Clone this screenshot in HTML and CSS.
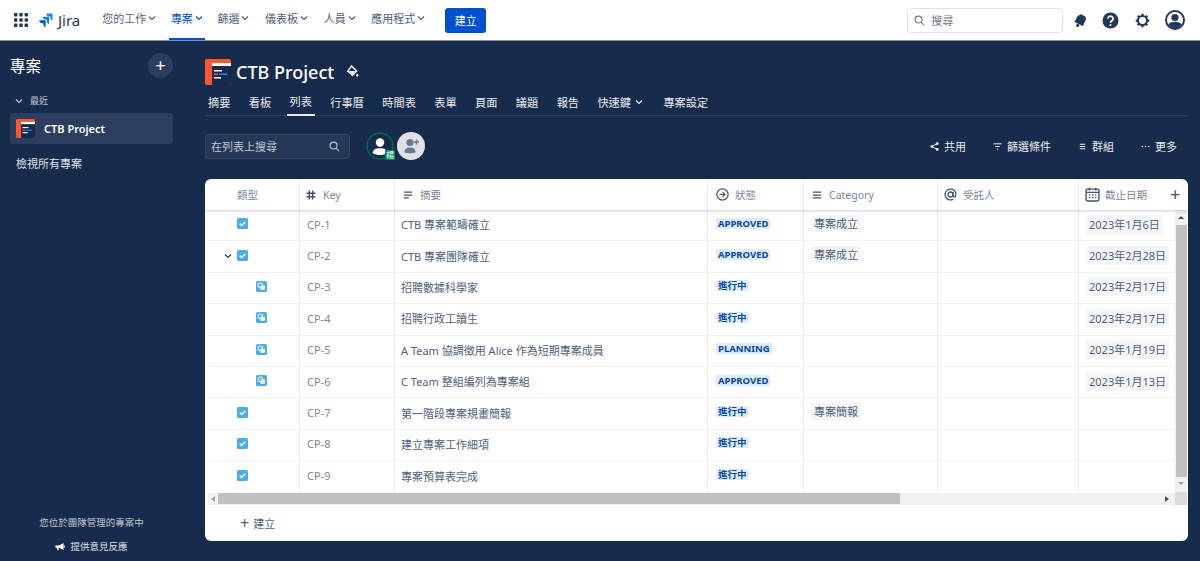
FILE: index.html
```html
<!DOCTYPE html>
<html lang="zh-Hant">
<head>
    <meta charset="UTF-8">
    <title>CTB Project - 列表</title>
    <link rel="stylesheet" href="styles.css">
</head>
<body>

<svg class="defs">
    <defs>
        <symbol id="chev" viewBox="0 0 8 8"><path d="M1 2.500l3 3 3-3" fill="none" stroke="currentColor" stroke-width="1.200"/></symbol>
        <symbol id="logo" viewBox="0 0 26 26">
            <rect width="26" height="26" rx="2" fill="#ff5630"/>
            <path d="M7 7h19v17a2 2 0 0 1-2 2H7z" fill="#172b4d"/>
            <rect x="7" y="4" width="19" height="3" fill="#fff"/>
            <rect x="9" y="11" width="8" height="1.500" fill="#fff"/>
            <rect x="9" y="14.500" width="4" height="1.500" fill="#ff5630"/>
            <rect x="14" y="14.500" width="8" height="1.500" fill="#2684ff"/>
            <rect x="9" y="18" width="7" height="1.500" fill="#fff"/>
        </symbol>
        <symbol id="task" viewBox="0 0 11 11">
            <rect width="11" height="11" rx="1.500" fill="#4bade8"/>
            <path d="M2.800 5.600l1.900 1.900 3.600-3.800" fill="none" stroke="#fff" stroke-width="1.500"/>
        </symbol>
        <symbol id="subtask" viewBox="0 0 11 11">
            <rect width="11" height="11" rx="1.500" fill="#4bade8"/>
            <rect x="2.200" y="2.200" width="4.200" height="4.200" rx=".6" fill="none" stroke="#fff" stroke-width="1"/>
            <rect x="4.400" y="4.400" width="4.400" height="4.400" rx=".6" fill="#fff"/>
        </symbol>
        <symbol id="lines" viewBox="0 0 12 12"><path d="M1 2.500h10M1 6h10M1 9.500h6" fill="none" stroke="currentColor" stroke-width="1.500"/></symbol>
    </defs>
</svg>

<header class="topbar">
    <svg class="apps" viewBox="0 0 14 14" fill="#253858">
        <rect x="0" y="0" width="3.400" height="3.400" rx=".6"/><rect x="5.300" y="0" width="3.400" height="3.400" rx=".6"/><rect x="10.600" y="0" width="3.400" height="3.400" rx=".6"/>
        <rect x="0" y="5.300" width="3.400" height="3.400" rx=".6"/><rect x="5.300" y="5.300" width="3.400" height="3.400" rx=".6"/><rect x="10.600" y="5.300" width="3.400" height="3.400" rx=".6"/>
        <rect x="0" y="10.600" width="3.400" height="3.400" rx=".6"/><rect x="5.300" y="10.600" width="3.400" height="3.400" rx=".6"/><rect x="10.600" y="10.600" width="3.400" height="3.400" rx=".6"/>
    </svg>
    <div class="brand">
        <svg class="brand-mark" viewBox="0 0 15 15">
            <path d="M14.500 0.500H8.200c0 1.700 1.300 3 3 3h1.100v1.100c0 1.600 1 2.800 2.200 3z" fill="#2684ff"/>
            <path d="M11 3.800H4.800c0 1.700 1.300 3 3 3h1.100v1.100c0 1.600 1 2.800 2.100 3z" fill="#1d78f2"/>
            <path d="M7.600 7.200H1.200c0 1.700 1.400 3 3 3h1.200v1.100c0 1.600 1 2.900 2.200 3.200z" fill="#0052cc"/>
        </svg>
        <span>Jira</span>
    </div>
    <nav class="topnav">
        <a class="topnav-item">您的工作<svg class="chev"><use href="#chev"/></svg></a>
        <a class="topnav-item active">專案<svg class="chev"><use href="#chev"/></svg></a>
        <a class="topnav-item">篩選<svg class="chev"><use href="#chev"/></svg></a>
        <a class="topnav-item">儀表板<svg class="chev"><use href="#chev"/></svg></a>
        <a class="topnav-item">人員<svg class="chev"><use href="#chev"/></svg></a>
        <a class="topnav-item">應用程式<svg class="chev"><use href="#chev"/></svg></a>
    </nav>
    <button class="create-btn">建立</button>
    <div class="top-search">
        <svg class="search-icon" viewBox="0 0 12 12"><circle cx="5" cy="5" r="3.800" fill="none" stroke="#6b778c" stroke-width="1.200"/><path d="M8 8l3 3" stroke="#6b778c" stroke-width="1.200"/></svg>
        <span>搜尋</span>
    </div>
    <div class="top-icons">
        <svg class="top-icon bell" viewBox="0 0 16 16"><path d="M9.200 1.500c-.8-.5-1.600-.2-2 .5C4.500 2.700 3.600 4.500 3.300 7L1.200 9.200 10.800 14l.9-3c1.600-1.800 2.300-3.600 1.800-5.400.4-.8.200-1.600-.5-2z" fill="#253858"/><circle cx="5" cy="13.200" r="1.700" fill="#253858"/></svg>
        <svg class="top-icon help" viewBox="0 0 18 18"><circle cx="9" cy="9" r="8.500" fill="#253858"/><path d="M6.300 7a2.700 2.700 0 1 1 4.200 2.300c-.9.600-1.500 1-1.500 2" fill="none" stroke="#fff" stroke-width="1.800"/><circle cx="9" cy="13.700" r="1.100" fill="#fff"/></svg>
        <svg class="top-icon gear" viewBox="0 0 16 16"><circle cx="8" cy="8" r="4.800" fill="none" stroke="#253858" stroke-width="2.200"/><path d="M8 .8v2.400M8 12.800v2.400M.8 8h2.400M12.800 8h2.400M2.900 2.900l1.700 1.700M11.400 11.400l1.700 1.700M13.100 2.900l-1.700 1.700M4.600 11.400l-1.700 1.700" stroke="#253858" stroke-width="2.400"/></svg>
        <svg class="top-icon avatar" viewBox="0 0 20 20"><circle cx="10" cy="10" r="9" fill="#fff" stroke="#253858" stroke-width="2"/><circle cx="10" cy="7.500" r="3.600" fill="#253858"/><path d="M3.500 14.500c1-2 3-2.800 6.500-2.800s5.500.8 6.500 2.800C15 17 12.500 18.500 10 18.500S5 17 3.500 14.500z" fill="#253858"/></svg>
    </div>
</header>

<div class="layout">
    <aside class="sidebar">
        <div class="side-head">
            <h2>專案</h2>
            <span class="side-add">+</span>
        </div>
        <div class="side-group"><svg class="chev"><use href="#chev"/></svg>最近</div>
        <div class="side-project">
            <svg class="side-logo"><use href="#logo"/></svg>
            CTB Project
        </div>
        <div class="side-all">檢視所有專案</div>
        <div class="side-foot">
            <p>您位於團隊管理的專案中</p>
            <p class="feedback">
                <svg class="feedback-icon" viewBox="0 0 10 10"><path d="M.5 3.500h3.500L8.500 1v7L4 5.800H3.300l.7 2.400H2.600L1.800 5.800H.5z" fill="#fff"/><path d="M9.200 3.400v2.400" stroke="#fff"/></svg>
                提供意見反應
            </p>
        </div>
    </aside>

    <main class="main">
        <div class="project-head">
            <svg class="project-logo"><use href="#logo"/></svg>
            <h1>CTB Project</h1>
            <svg class="paint" viewBox="0 0 14 14"><path d="M6 1l5.500 5.500L7 11 2 6.500z" fill="none" stroke="#fff" stroke-width="1.500"/><path d="M3 6.500h7L7 10z" fill="#fff"/><circle cx="12" cy="11" r="1.300" fill="#fff"/></svg>
        </div>
        <nav class="tabs">
            <a class="tab">摘要</a>
            <a class="tab">看板</a>
            <a class="tab active">列表</a>
            <a class="tab">行事曆</a>
            <a class="tab">時間表</a>
            <a class="tab">表單</a>
            <a class="tab">頁面</a>
            <a class="tab">議題</a>
            <a class="tab">報告</a>
            <a class="tab">快速鍵<svg class="chev tab-chev"><use href="#chev"/></svg></a>
            <a class="tab">專案設定</a>
        </nav>

        <div class="toolbar">
            <div class="list-search">
                <span>在列表上搜尋</span>
                <svg class="search-icon" viewBox="0 0 12 12"><circle cx="5" cy="5" r="3.800" fill="none" stroke="#c1c7d0" stroke-width="1.200"/><path d="M8 8l3 3" stroke="#c1c7d0" stroke-width="1.200"/></svg>
            </div>
            <div class="people">
                <div class="person">
                    <svg viewBox="0 0 28 28"><circle cx="14" cy="14" r="13" fill="#172b4d" stroke="#00694a" stroke-width="1.500"/><circle cx="14" cy="10.500" r="4.200" fill="#fff"/><path d="M6.500 21c.5-3.500 3.500-4.800 7.500-4.800s7 1.300 7.500 4.800c-2 1.500-5 2-7.500 2s-5.500-.5-7.500-2z" fill="#fff"/></svg>
                    <span class="person-badge">楊</span>
                </div>
                <svg class="add-person" viewBox="0 0 28 28"><circle cx="14" cy="14" r="14" fill="#dfe1e6"/><circle cx="13" cy="10.500" r="3.600" fill="#6b778c"/><path d="M7.500 20.500c0-3.500 2-5 5.500-5s5.500 1.500 5.500 5c-1.500 1-9.500 1-11 0z" fill="#6b778c"/><path d="M19.500 7.500v5M17 10h5" stroke="#6b778c" stroke-width="1.400"/></svg>
            </div>
            <div class="actions">
                <a class="action">
                    <svg viewBox="0 0 10 10"><circle cx="2" cy="5" r="1.500" fill="#fff"/><circle cx="8" cy="1.800" r="1.500" fill="#fff"/><circle cx="8" cy="8.200" r="1.500" fill="#fff"/><path d="M2 5l6-3.200M2 5l6 3.200" stroke="#fff"/></svg>
                    共用
                </a>
                <a class="action">
                    <svg viewBox="0 0 10 10"><path d="M.5 2h9M2.500 5h5M4.200 8h1.600" stroke="#fff"/></svg>
                    篩選條件
                </a>
                <a class="action">
                    <svg viewBox="0 0 10 10"><path d="M2 2.500h6M2 5h6M2 7.500h6" stroke="#fff"/></svg>
                    群組
                </a>
                <a class="action">
                    <svg viewBox="0 0 10 10" fill="#fff"><circle cx="1.500" cy="5" r=".9"/><circle cx="5" cy="5" r=".9"/><circle cx="8.500" cy="5" r=".9"/></svg>
                    更多
                </a>
            </div>
        </div>

        <section class="card">
            <div class="row head-row">
                <div class="cell c-type"><span class="type-label">類型</span></div>
                <div class="cell c-key"><svg class="h-icon" viewBox="0 0 10 10"><path d="M3.300 .5v9M6.700 .5v9M.5 3.300h9M.5 6.700h9" fill="none" stroke="#42526e" stroke-width="1.400"/></svg>Key</div>
                <div class="cell c-sum"><svg class="h-icon"><use href="#lines"/></svg>摘要</div>
                <div class="cell c-status"><svg class="h-icon big" viewBox="0 0 12 12"><circle cx="6" cy="6" r="5.200" fill="none" stroke="#42526e" stroke-width="1.100"/><path d="M3.200 6h5M6 3.800L8.200 6 6 8.200" fill="none" stroke="#42526e" stroke-width="1.100"/></svg>狀態</div>
                <div class="cell c-cat"><svg class="h-icon" viewBox="0 0 12 12"><path d="M1 2.500h10M1 6h10M1 9.500h10" fill="none" stroke="#42526e" stroke-width="1.500"/></svg>Category</div>
                <div class="cell c-user"><svg class="h-icon big" viewBox="0 0 12 12"><circle cx="6" cy="6" r="2.300" fill="none" stroke="#42526e" stroke-width="1.200"/><path d="M8.300 3.700V7c0 1.800 2.700 1.800 2.700-1A5 5 0 1 0 8.500 10.300" fill="none" stroke="#42526e" stroke-width="1.200"/></svg>受託人</div>
                <div class="cell c-date"><svg class="h-icon cal" viewBox="0 0 14 14"><rect x="1" y="2" width="12" height="11" rx="1.500" fill="none" stroke="#42526e" stroke-width="1.300"/><path d="M1 5h12M4 .8v2.400M10 .8v2.400" stroke="#42526e" stroke-width="1.300"/><path d="M3.500 7.300h1.500M6.300 7.300h1.500M9.100 7.300h1.500M3.500 10h1.500M6.300 10h1.500M9.100 10h1.500" stroke="#42526e" stroke-width="1.200"/></svg>截止日期</div>
                <div class="head-add">+</div>
            </div>

            <div class="body-wrap">
                <div class="rows">
                    <div class="row">
                        <div class="cell c-type"><svg class="issue"><use href="#task"/></svg></div>
                        <div class="cell c-key">CP-1</div>
                        <div class="cell c-sum">CTB 專案範疇確立</div>
                        <div class="cell c-status"><span class="lozenge">APPROVED</span></div>
                        <div class="cell c-cat"><span class="tag">專案成立</span></div>
                        <div class="cell c-user"></div>
                        <div class="cell c-date"><span class="tag">2023年1月6日</span></div>
                    </div>
                    <div class="row">
                        <div class="cell c-type"><svg class="expand"><use href="#chev"/></svg><svg class="issue"><use href="#task"/></svg></div>
                        <div class="cell c-key">CP-2</div>
                        <div class="cell c-sum">CTB 專案團隊確立</div>
                        <div class="cell c-status"><span class="lozenge">APPROVED</span></div>
                        <div class="cell c-cat"><span class="tag">專案成立</span></div>
                        <div class="cell c-user"></div>
                        <div class="cell c-date"><span class="tag">2023年2月28日</span></div>
                    </div>
                    <div class="row">
                        <div class="cell c-type"><svg class="issue sub"><use href="#subtask"/></svg></div>
                        <div class="cell c-key">CP-3</div>
                        <div class="cell c-sum">招聘數據科學家</div>
                        <div class="cell c-status"><span class="lozenge">進行中</span></div>
                        <div class="cell c-cat"></div>
                        <div class="cell c-user"></div>
                        <div class="cell c-date"><span class="tag">2023年2月17日</span></div>
                    </div>
                    <div class="row">
                        <div class="cell c-type"><svg class="issue sub"><use href="#subtask"/></svg></div>
                        <div class="cell c-key">CP-4</div>
                        <div class="cell c-sum">招聘行政工讀生</div>
                        <div class="cell c-status"><span class="lozenge">進行中</span></div>
                        <div class="cell c-cat"></div>
                        <div class="cell c-user"></div>
                        <div class="cell c-date"><span class="tag">2023年2月17日</span></div>
                    </div>
                    <div class="row">
                        <div class="cell c-type"><svg class="issue sub"><use href="#subtask"/></svg></div>
                        <div class="cell c-key">CP-5</div>
                        <div class="cell c-sum">A Team 協調徵用 Alice 作為短期專案成員</div>
                        <div class="cell c-status"><span class="lozenge">PLANNING</span></div>
                        <div class="cell c-cat"></div>
                        <div class="cell c-user"></div>
                        <div class="cell c-date"><span class="tag">2023年1月19日</span></div>
                    </div>
                    <div class="row">
                        <div class="cell c-type"><svg class="issue sub"><use href="#subtask"/></svg></div>
                        <div class="cell c-key">CP-6</div>
                        <div class="cell c-sum">C Team 整組編列為專案組</div>
                        <div class="cell c-status"><span class="lozenge">APPROVED</span></div>
                        <div class="cell c-cat"></div>
                        <div class="cell c-user"></div>
                        <div class="cell c-date"><span class="tag">2023年1月13日</span></div>
                    </div>
                    <div class="row">
                        <div class="cell c-type"><svg class="issue"><use href="#task"/></svg></div>
                        <div class="cell c-key">CP-7</div>
                        <div class="cell c-sum">第一階段專案規畫簡報</div>
                        <div class="cell c-status"><span class="lozenge">進行中</span></div>
                        <div class="cell c-cat"><span class="tag">專案簡報</span></div>
                        <div class="cell c-user"></div>
                        <div class="cell c-date"></div>
                    </div>
                    <div class="row">
                        <div class="cell c-type"><svg class="issue"><use href="#task"/></svg></div>
                        <div class="cell c-key">CP-8</div>
                        <div class="cell c-sum">建立專案工作細項</div>
                        <div class="cell c-status"><span class="lozenge">進行中</span></div>
                        <div class="cell c-cat"></div>
                        <div class="cell c-user"></div>
                        <div class="cell c-date"></div>
                    </div>
                    <div class="row last">
                        <div class="cell c-type"><svg class="issue"><use href="#task"/></svg></div>
                        <div class="cell c-key">CP-9</div>
                        <div class="cell c-sum">專案預算表完成</div>
                        <div class="cell c-status"><span class="lozenge">進行中</span></div>
                        <div class="cell c-cat"></div>
                        <div class="cell c-user"></div>
                        <div class="cell c-date"></div>
                    </div>
                    <div class="hscroll">
                        <span class="arrow-left"></span>
                        <div class="hthumb"></div>
                        <span class="arrow-right"></span>
                    </div>
                </div>
                <div class="vscroll">
                    <span class="arrow-up"></span>
                    <div class="vthumb"></div>
                    <span class="arrow-down"></span>
                    <div class="corner"></div>
                </div>
            </div>

            <div class="card-foot"><span class="foot-plus">+</span>建立</div>
        </section>
    </main>
</div>

</body>
</html>
```

FILE: styles.css
```css
* {
    box-sizing: border-box;
}
html, body {
    margin: 0;
    height: 561px;
    overflow: hidden;
}
body {
    font-family: "Noto Sans", "Noto Sans CJK TC", sans-serif;
    font-size: 11px;
    background-color: #172b4d;
    color: #fff;
}
h1, h2, p {
    margin: 0;
    font-weight: normal;
}
.defs {
    display: none;
}
.chev {
    width: 8px;
    height: 8px;
    flex: none;
}

/* Top bar */
.topbar {
    height: 41px;
    background-color: #fff;
    border-bottom: 1px solid #8993a4;
    display: flex;
    align-items: center;
    padding-left: 14px;
    color: #505f79;
}
.apps {
    width: 14px;
    height: 14px;
    flex: none;
}
.brand {
    display: flex;
    align-items: center;
    margin-left: 10px;
    gap: 5px;
    font-size: 15px;
    color: #253858;
}
.brand-mark {
    width: 15px;
    height: 15px;
}
.topnav {
    display: flex;
    margin-left: 21px;
    height: 40px;
    gap: 13.600px;
}
.topnav-item {
    display: flex;
    align-items: center;
    gap: 2px;
    padding: 0 1px 2px;
    white-space: nowrap;
    border-bottom: 2px solid transparent;
}
.topnav-item.active {
    color: #0052cc;
    border-bottom-color: #0052cc;
    margin: 0 -2px;
    padding: 0 2px 2px;
}
.create-btn {
    margin-left: 19px;
    width: 41px;
    height: 25px;
    padding: 0;
    background-color: #0052cc;
    color: #fff;
    border: none;
    border-radius: 3px;
    font: inherit;
}
.top-search {
    margin-left: 421px;
    width: 156px;
    height: 25px;
    border: 1px solid #dfe1e6;
    border-radius: 4px;
    display: flex;
    align-items: center;
    gap: 6px;
    padding-left: 6px;
    color: #6b778c;
}
.search-icon {
    width: 11px;
    height: 11px;
    flex: none;
}
.top-icons {
    display: flex;
    align-items: center;
    margin-left: 10px;
}
.top-icon {
    width: 15px;
    height: 15px;
    flex: none;
}
.top-icon.help {
    width: 17px;
    height: 17px;
    margin-left: 14px;
}
.top-icon.gear {
    margin-left: 16px;
}
.top-icon.avatar {
    width: 20px;
    height: 20px;
    margin-left: 15px;
}

/* Sidebar */
.layout {
    display: flex;
    height: 520px;
}
.sidebar {
    width: 190px;
    flex: none;
    padding: 0 17px 0 10px;
    display: flex;
    flex-direction: column;
}
.side-head {
    display: flex;
    justify-content: space-between;
    align-items: center;
    height: 24px;
    margin-top: 12px;
}
.side-head h2 {
    font-size: 15.500px;
}
.side-add {
    width: 25px;
    height: 25px;
    border-radius: 50%;
    background-color: #2c3e5d;
    text-align: center;
    font-size: 18px;
    line-height: 24px;
}
.side-group {
    display: flex;
    align-items: center;
    gap: 7px;
    margin-top: 15px;
    padding-left: 5px;
    font-size: 9px;
    line-height: 18px;
    color: #c1c7d0;
}
.side-project {
    display: flex;
    align-items: center;
    height: 31px;
    margin-top: 3px;
    padding-left: 6px;
    gap: 9px;
    background-color: #2c3e5d;
    border-radius: 3px;
    font-size: 11px;
    font-weight: 600;
}
.side-logo {
    width: 19px;
    height: 19px;
    flex: none;
}
.side-all {
    margin-top: 12px;
    padding-left: 6px;
    line-height: 16px;
    color: #dfe1e6;
}
.side-foot {
    margin-top: auto;
    padding-bottom: 7px;
    text-align: center;
    font-size: 9.500px;
    color: #c1c7d0;
}
.feedback {
    margin-top: 11px;
    color: #dfe1e6;
    display: flex;
    justify-content: center;
    align-items: center;
    gap: 5px;
    line-height: 14px;
}
.feedback-icon {
    width: 10px;
    height: 10px;
}

/* Project header */
.main {
    flex: 1;
    min-width: 0;
    padding: 17px 12px 0 15px;
}
.project-head {
    display: flex;
    align-items: center;
    height: 27px;
}
.project-logo {
    width: 26px;
    height: 26px;
    flex: none;
}
.project-head h1 {
    font-size: 18px;
    font-weight: 500;
    margin-left: 5px;
    padding-top: 2px;
    line-height: 27px;
}
.paint {
    width: 13px;
    height: 13px;
    margin-left: 12px;
}
.tabs {
    display: flex;
    margin-top: 5px;
    height: 26px;
    gap: 18.400px;
    padding-left: 3px;
    border-bottom: 1px solid #2c3e5d;
    color: #ebecf0;
}
.tab {
    display: flex;
    align-items: center;
    height: 26px;
    white-space: nowrap;
    padding: 0 0 3px;
    font-size: 11.200px;
}
.tab.active {
    border-bottom: 2px solid #ebecf0;
    margin: 0 -3px;
    padding: 0 3px 2px;
}
.tab-chev {
    margin-left: 4px;
    margin-right: 2px;
}

/* Toolbar */
.toolbar {
    display: flex;
    align-items: center;
    margin-top: 17px;
    height: 26px;
}
.list-search {
    width: 145px;
    height: 25px;
    background-color: #253858;
    border: 1px solid #344563;
    border-radius: 3px;
    display: flex;
    align-items: center;
    justify-content: space-between;
    padding: 0 9px 0 5px;
    color: #c1c7d0;
}
.people {
    display: flex;
    align-items: center;
    gap: 3px;
    margin-left: 16px;
}
.person {
    position: relative;
    width: 28px;
    height: 28px;
}
.person svg {
    width: 28px;
    height: 28px;
    display: block;
}
.person-badge {
    position: absolute;
    right: -1px;
    bottom: 0;
    background-color: #00875a;
    font-size: 8px;
    line-height: 10px;
    width: 10px;
    text-align: center;
}
.add-person {
    width: 28px;
    height: 28px;
}
.actions {
    margin-left: auto;
    display: flex;
    gap: 27px;
    padding-right: 11px;
    color: #ebecf0;
}
.action {
    display: flex;
    align-items: center;
    gap: 5px;
}
.action svg {
    width: 9px;
    height: 9px;
}

/* Card and table */
.card {
    margin-top: 20px;
    width: 983px;
    height: 362px;
    background-color: #fff;
    border-radius: 6px;
    color: #505f79;
    display: flex;
    flex-direction: column;
    overflow: hidden;
}
.row {
    display: flex;
    height: 31.400px;
    border-bottom: 1px solid #f1f2f4;
    margin-left: 3px;
}
.row.last {
    border-bottom: none;
}
.head-row {
    height: 31px;
    margin-left: 0;
    padding-left: 3px;
    border-bottom: none;
    box-shadow: 0 1px 3px rgba(9, 30, 66, 0.22);
    color: #7a869a;
    position: relative;
}
.cell {
    display: flex;
    align-items: center;
    padding-left: 7px;
    padding-bottom: 2px;
    border-right: 1px solid #ebecf0;
    flex: none;
    white-space: nowrap;
}
.c-type {
    width: 92px;
    padding-left: 0;
}
.c-key {
    width: 95px;
    color: #7a869a;
}
.c-sum {
    width: 313px;
    padding-left: 6px;
}
.c-status {
    width: 96px;
    padding-left: 8px;
}
.c-cat {
    width: 134px;
    padding-left: 7px;
}
.c-user {
    width: 141px;
}
.c-date {
    width: 96px;
    padding-left: 7px;
    border-right: none;
}
.head-row .cell {
    font-size: 10.500px;
    padding-bottom: 0;
}
.head-row .c-key {
    padding-left: 6px;
}
.type-label {
    margin-left: 29px;
}
.head-row .c-status {
    padding-left: 8px;
}
.head-row .c-user {
    padding-left: 6px;
}
.head-row .c-sum, .head-row .c-cat {
    padding-left: 8px;
}
.head-row .c-date {
    padding-left: 6px;
}
.h-icon {
    width: 10px;
    height: 10px;
    margin-right: 7px;
    flex: none;
    color: #42526e;
}
.h-icon.big {
    width: 13px;
    height: 13px;
    margin-right: 6px;
}
.h-icon.cal {
    width: 15px;
    height: 15px;
    margin-right: 5px;
}
.head-add {
    font-size: 18px;
    color: #42526e;
    line-height: 31px;
    margin-left: -5px;
}
.body-wrap {
    display: flex;
    height: 295px;
}
.rows {
    width: 970px;
    flex: none;
}
.issue {
    width: 11px;
    height: 11px;
    margin-left: 29px;
    margin-top: -1px;
    flex: none;
}
.issue.sub {
    margin-left: 48px;
}
.expand {
    width: 8px;
    height: 8px;
    margin-left: 16px;
    margin-right: -24px;
    color: #253858;
    flex: none;
}
.lozenge {
    background-color: #deebff;
    color: #0747a6;
    font-size: 9.500px;
    font-weight: 700;
    line-height: 11px;
    padding: 0 2px;
    border-radius: 2px;
    margin-top: -2px;
}
.tag {
    background-color: #f4f5f7;
    line-height: 17px;
    padding: 0 3px;
    border-radius: 2px;
    margin-top: -2px;
}
.c-date .tag {
    margin-top: 0;
    line-height: 19px;
}

/* Scrollbars */
.hscroll {
    height: 12.400px;
    background-color: #f1f1f1;
    display: flex;
    align-items: center;
    margin-left: 3px;
}
.hthumb {
    width: 682px;
    height: 11px;
    margin-left: 3px;
    background-color: #c1c1c1;
}
.arrow-left, .arrow-right {
    width: 0;
    height: 0;
    border-top: 3px solid transparent;
    border-bottom: 3px solid transparent;
    flex: none;
}
.arrow-left {
    border-right: 4px solid #a3a3a3;
    margin-left: 3px;
}
.arrow-right {
    border-left: 4px solid #505050;
    margin-left: auto;
    margin-right: 6px;
}
.vscroll {
    width: 12px;
    background-color: #f1f1f1;
    display: flex;
    flex-direction: column;
    align-items: center;
    flex: none;
}
.arrow-up, .arrow-down {
    width: 0;
    height: 0;
    border-left: 3px solid transparent;
    border-right: 3px solid transparent;
    flex: none;
}
.arrow-up {
    border-bottom: 3px solid #505050;
    margin-top: 6px;
}
.vthumb {
    width: 11px;
    height: 252px;
    margin-top: 6px;
    background-color: #c1c1c1;
}
.arrow-down {
    border-top: 3px solid #a3a3a3;
    margin-top: 5px;
}
.corner {
    width: 12px;
    height: 13px;
    margin-top: auto;
    background-color: #dcdcdc;
}
.card-foot {
    display: flex;
    align-items: center;
    flex: 1;
    padding: 0 0 1px 35px;
    gap: 4px;
    font-size: 11px;
}
.foot-plus {
    font-size: 16px;
    line-height: 16px;
}
```
